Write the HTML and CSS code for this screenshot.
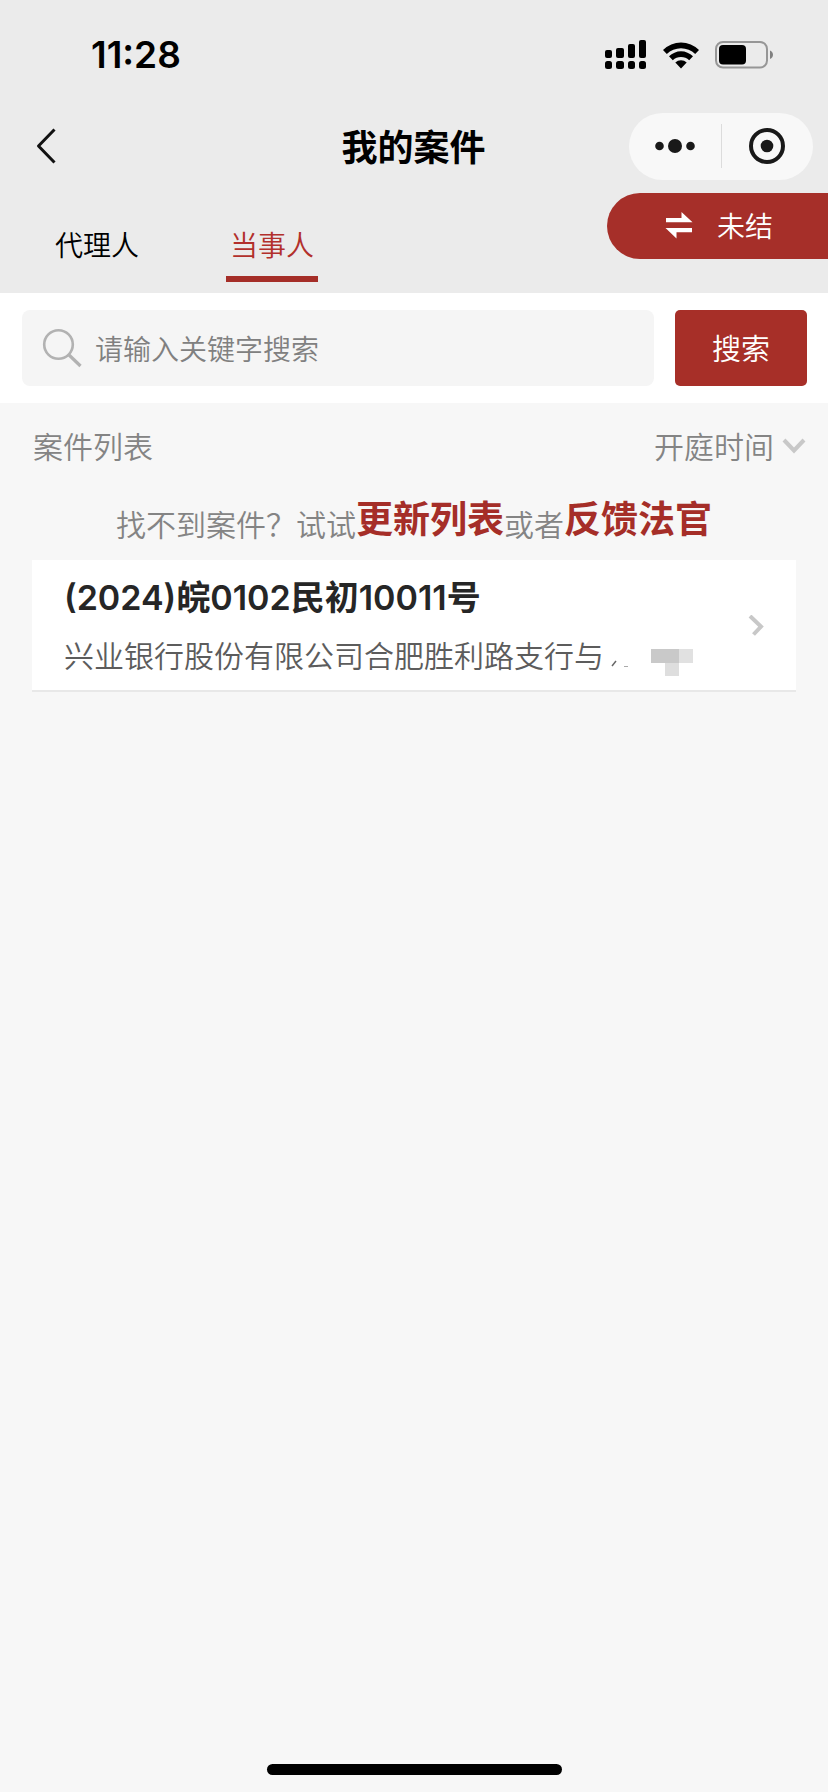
FILE: index.html
```html
<!DOCTYPE html>
<html lang="zh-CN">
<head>
<meta charset="utf-8">
<meta name="viewport" content="width=device-width, initial-scale=1">
<title>我的案件</title>
<link rel="stylesheet" href="styles.css">
</head>
<body>
<div class="app">
  <header class="header">
    <div class="status">
      <time class="clock">11:28</time>
      <div class="status-icons">
        <svg class="signal" width="42" height="30" viewBox="0 0 42 30" aria-hidden="true">
          <rect x="0" y="10" width="7" height="8" rx="2"/><rect x="11" y="8" width="8" height="10" rx="2"/><rect x="23" y="4" width="7" height="14" rx="2"/><rect x="34" y="0" width="7" height="18" rx="2"/>
          <rect x="0" y="21" width="7" height="8" rx="2.5"/><rect x="11" y="21" width="8" height="8" rx="2.5"/><rect x="23" y="21" width="7" height="8" rx="2.5"/><rect x="34" y="21" width="7" height="8" rx="2.5"/>
        </svg>
        <svg class="wifi" width="36" height="27" viewBox="0 0 36 27" aria-hidden="true">
          <path d="M0 8a25.500 25.500 0 0 1 36 0l-3.800 4a20.300 20.300 0 0 0-28.400 0z"/>
          <path d="M6 14.300a17 17 0 0 1 24 0l-3.800 4a11.800 11.800 0 0 0-16.400 0z"/>
          <path d="M12.300 20.500a8.400 8.400 0 0 1 11.400 0L18 26.500z"/>
        </svg>
        <svg class="battery" width="58" height="28" viewBox="0 0 58 28" aria-hidden="true">
          <rect x="1" y="1" width="51" height="25.500" rx="7" fill="none" stroke="#969696" stroke-width="2"/>
          <rect x="4" y="4" width="27" height="19.500" rx="4"/>
          <path d="M55 9.500c4 1.500 4 7 0 8.500z" fill="#808080"/>
        </svg>
      </div>
    </div>
    <div class="nav">
      <button class="back" type="button" aria-label="返回">
        <svg width="20" height="36" viewBox="0 0 20 36" aria-hidden="true"><path d="M18.500 1.500 2.500 18l16 16.500" fill="none" stroke="#111" stroke-width="3" stroke-linejoin="round"/></svg>
      </button>
      <h1 class="title">我的案件</h1>
      <div class="capsule">
        <button class="capsule-btn" type="button" aria-label="更多">
          <svg width="40" height="16" viewBox="0 0 40 16" aria-hidden="true"><circle cx="4.500" cy="8" r="4.300"/><circle cx="20" cy="8" r="7"/><circle cx="35.500" cy="8" r="4.300"/></svg>
        </button>
        <button class="capsule-btn" type="button" aria-label="关闭">
          <svg width="36" height="36" viewBox="0 0 36 36" aria-hidden="true"><circle cx="18" cy="18" r="16" fill="none" stroke="#191919" stroke-width="4"/><circle cx="18" cy="18" r="6.300"/></svg>
        </button>
      </div>
    </div>
    <div class="tabbar">
      <nav class="tabs">
        <button class="tab" type="button">代理人</button>
        <button class="tab tab-active" type="button">当事人</button>
      </nav>
      <button class="toggle" type="button">
        <svg width="28" height="28" viewBox="0 0 28 28" aria-hidden="true"><path d="M1 6h15.500V0L27.500 10.300H1zM27 20.300H11.500V26.500L.5 16H27z" fill="#fff"/></svg>
        <span class="toggle-text">未结</span>
      </button>
    </div>
  </header>

  <form class="search">
    <label class="field">
      <svg width="40" height="40" viewBox="0 0 40 40" aria-hidden="true"><circle cx="16.500" cy="16.500" r="14.300" fill="none" stroke="#b2b2b2" stroke-width="2.600"/><path d="m26.500 26.500 12 11.500" fill="none" stroke="#b2b2b2" stroke-width="3.200"/></svg>
      <input class="input" type="text" placeholder="请输入关键字搜索" aria-label="请输入关键字搜索">
    </label>
    <button class="submit" type="button">搜索</button>
  </form>

  <main class="main">
    <div class="list-head">
      <h2 class="list-title">案件列表</h2>
      <button class="sort" type="button">开庭时间
        <svg width="24" height="20" viewBox="0 0 24 20" aria-hidden="true"><path d="m2 5 10 10.500L22 5" fill="none" stroke="#c8c8c8" stroke-width="4"/></svg>
      </button>
    </div>
    <p class="hint"><span>找不到案件？试试</span><a class="link" href="#refresh">更新列表</a><span>或者</span><a class="link" href="#feedback">反馈法官</a></p>
    <a class="card" href="#case">
      <span class="card-body">
        <span class="case-no">(2024)皖0102民初10011号</span>
        <span class="case-name"><span>兴业银行股份有限公司合肥胜利路支行与</span>
          <svg width="92" height="44" viewBox="0 0 92 44" aria-hidden="true"><path d="m12 29-4 5" stroke="#666" stroke-width="1.500"/><path d="M20 34.500h4" stroke="#aaa"/><path d="M47 17h28v14H47z" fill="#c9c9c9"/><path d="M75 17h14v14H75z" fill="#e1e1e1"/><path d="M61 31h14v13H61z" fill="#dedede"/></svg>
        </span>
      </span>
      <svg class="chevron" width="16" height="22" viewBox="0 0 16 22" aria-hidden="true"><path d="m2 1 11 10.500L5.500 19.500" fill="none" stroke="#c8c8c8" stroke-width="4"/></svg>
    </a>
  </main>
  <div class="home"></div>
</div>
</body>
</html>
```
FILE: styles.css
```css
* { box-sizing: border-box; }
body {
  margin: 0;
  background: #f7f7f7;
  color: #000;
  font-family: "Noto Sans CJK SC", sans-serif;
  font-weight: 350;
}
button {
  margin: 0;
  padding: 0;
  border: 0;
  background: none;
  color: inherit;
  font: inherit;
}
h1, h2, p { margin: 0; font-weight: inherit; }
a { color: inherit; text-decoration: none; }
svg { flex: none; display: block; }

.app {
  display: flex;
  flex-direction: column;
  min-height: 100vh;
}
.header { background: #ebebeb; }

.status {
  display: flex;
  align-items: center;
  justify-content: space-between;
  height: 110px;
  padding: 0 55px 0 91px;
}
.clock {
  font: 600 37px/44px Inter, sans-serif;
}
.status-icons { display: flex; align-items: center; gap: 16px; }

.nav {
  display: grid;
  grid-template-columns: 1fr auto 1fr;
  align-items: center;
  height: 72px;
  padding: 0 15px 0 36px;
}
.back { justify-self: start; }
.title {
  margin-right: 22px;
  padding-bottom: 2px;
  font-size: 36px;
  font-weight: 700;
  line-height: 52px;
}
.capsule {
  display: flex;
  justify-self: end;
  align-items: center;
  width: 184px;
  height: 67px;
  border-radius: 34px;
  background: #f8f8f8;
}
.capsule-btn {
  display: flex;
  flex: 1;
  align-items: center;
  justify-content: center;
  height: 44px;
  fill: #191919;
}
.capsule-btn + .capsule-btn { border-left: 1px solid #dcdcdc; }

.tabbar {
  display: flex;
  align-items: flex-start;
  justify-content: space-between;
  height: 111px;
  padding-top: 11px;
}
.tabs { display: flex; gap: 83px; padding: 28px 0 0 51px; }
.tab {
  width: 92px;
  height: 61px;
  padding-bottom: 9px;
  border-bottom: 6px solid transparent;
  font-size: 28px;
  line-height: 40px;
}
.tab-active { border-color: #a52e28; color: #b2302c; }
.toggle {
  display: flex;
  align-items: center;
  gap: 24px;
  width: 221px;
  height: 66px;
  padding-left: 58px;
  border-radius: 33px 0 0 33px;
  background: #a62f29;
  color: #fff;
  font-size: 28px;
  line-height: 40px;
}
.toggle-text { padding-bottom: 3px; }

.search {
  display: flex;
  gap: 21px;
  padding: 17px 21px 17px 22px;
  background: #fff;
}
.field {
  display: flex;
  flex: 1;
  align-items: center;
  gap: 13px;
  min-width: 0;
  height: 76px;
  padding: 0 20px;
  border-radius: 8px;
  background: #f5f5f5;
}
.input {
  flex: 1;
  min-width: 0;
  height: 48px;
  padding: 0;
  border: 0;
  outline: 0;
  background: none;
  font: inherit;
  font-size: 28px;
}
.input::placeholder { color: #808080; opacity: 1; }
.submit {
  width: 132px;
  height: 76px;
  padding-bottom: 2px;
  border-radius: 5px;
  background: #a72f28;
  color: #fff;
  font-size: 29px;
}

.main { flex: 1; color: #848484; font-size: 30px; }
.list-head {
  display: flex;
  align-items: center;
  justify-content: space-between;
  height: 84px;
  padding: 0 22px 0 33px;
}
.list-title { font-size: 30px; }
.sort { display: flex; align-items: center; gap: 8px; }
.hint {
  display: flex;
  align-items: flex-start;
  justify-content: center;
  padding-top: 4px;
  line-height: 64px;
}
.link {
  color: #a52e28;
  font-size: 37px;
  font-weight: 700;
  line-height: 52px;
}
.card {
  display: flex;
  align-items: center;
  justify-content: space-between;
  margin: 5px 32px 0;
  padding: 15px 32px 13px;
  border-bottom: 2px solid #e8e8e8;
  background: #fff;
}
.card-body { display: flex; flex-direction: column; gap: 10px; }
.case-no {
  color: #262626;
  font: 600 34px/46px Inter, "Noto Sans CJK SC", sans-serif;
}
.case-name {
  display: flex;
  align-items: center;
  color: #5c5c5c;
  line-height: 46px;
}

.home {
  width: 295px;
  height: 11px;
  margin: 0 auto 17px;
  border-radius: 6px;
  background: #000;
}
```
